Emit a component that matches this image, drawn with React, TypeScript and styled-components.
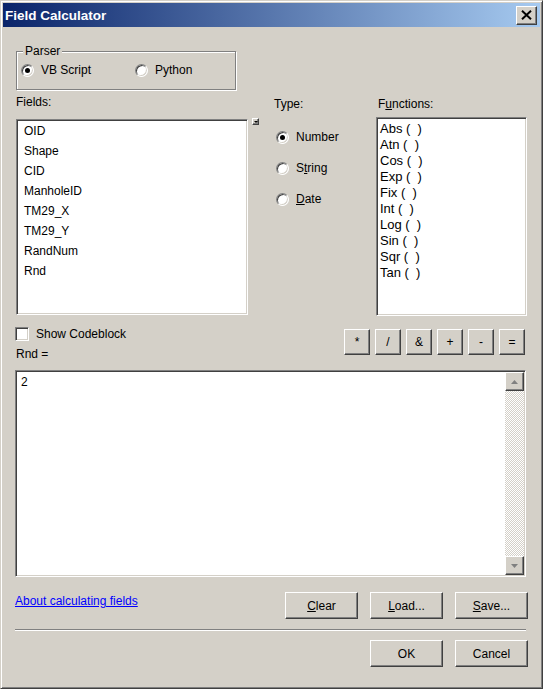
import styled, { createGlobalStyle } from "styled-components";

const GlobalStyle = createGlobalStyle`
  html, body {
    margin: 0;
    padding: 0;
    background: #d4d0c8;
  }
  body {
    font-family: "Liberation Sans", Arial, sans-serif;
    font-size: 12px;
    color: #000;
  }
`;

// classic 3D edges
const raised = `
  background: #d4d0c8;
  border: 1px solid;
  border-color: #fff #404040 #404040 #fff;
  box-shadow: inset -1px -1px 0 #808080, inset 1px 1px 0 #d4d0c8;
`;

const sunken = `
  background: #fff;
  border: 1px solid;
  border-color: #808080 #fff #fff #808080;
  box-shadow: inset 1px 1px 0 #404040, inset -1px -1px 0 #d4d0c8;
`;

const Window = styled.div`
  box-sizing: border-box;
  width: 543px;
  height: 689px;
  display: flex;
  flex-direction: column;
  padding: 2px;
  background: #d4d0c8;
  border: 1px solid;
  border-color: #d4d0c8 #404040 #404040 #d4d0c8;
  box-shadow: inset 1px 1px 0 #fff, inset -1px -1px 0 #808080;
`;

const TitleBar = styled.div`
  height: 24px;
  display: flex;
  align-items: center;
  justify-content: space-between;
  padding-left: 2px;
  background: linear-gradient(to right, #0a246a, #a6caf0);
`;

const Title = styled.span`
  color: #fff;
  font-weight: bold;
  font-size: 13.5px;
`;

const CloseButton = styled.div`
  ${raised}
  box-sizing: border-box;
  width: 21px;
  height: 19px;
  margin-right: 3px;
  display: flex;
  align-items: center;
  justify-content: center;
`;

const Content = styled.div`
  flex: 1;
  display: flex;
  flex-direction: column;
  padding: 0 12px;
`;

const Group = styled.fieldset`
  box-sizing: border-box;
  width: 220px;
  margin: 17px 0 0 1px;
  padding: 5px 0 12px 4px;
  border: 1px solid #808080;
  box-shadow: inset 1px 1px 0 #fff, 1px 1px 0 #fff;
`;

const Legend = styled.legend`
  margin-left: 2px;
  padding: 0 2px;
  line-height: 14px;
  background: #d4d0c8;
`;

const ParserRow = styled.div`
  display: grid;
  grid-template-columns: 114px auto;
`;

const Option = styled.label`
  display: flex;
  align-items: center;
  gap: 7px;
  height: 14px;
  line-height: 14px;
  white-space: nowrap;
`;

const RadioDot = styled.span<{ $checked?: boolean }>`
  ${sunken}
  box-sizing: border-box;
  position: relative;
  flex: none;
  width: 13px;
  height: 13px;
  border-radius: 50%;

  &::after {
    content: "";
    display: ${(p) => (p.$checked ? "block" : "none")};
    position: absolute;
    left: 3px;
    top: 3px;
    width: 5px;
    height: 5px;
    border-radius: 50%;
    background: #000;
  }
`;

const Columns = styled.div`
  display: grid;
  grid-template-columns: 243px 117px 151px;
  margin-top: 5px;
  padding-left: 1px;
`;

const Column = styled.div<{ $indent?: number }>`
  display: flex;
  flex-direction: column;
  padding-left: ${(p) => p.$indent ?? 0}px;
`;

const Label = styled.div<{ $top?: number; $indent?: number }>`
  line-height: 14px;
  margin-top: ${(p) => p.$top ?? 0}px;
  padding-left: ${(p) => p.$indent ?? 0}px;
  white-space: nowrap;
`;

const ListRow = styled.div`
  display: flex;
  align-items: flex-start;
  margin-top: 10px;
`;

const ListBox = styled.div<{ $w: number; $h: number }>`
  ${sunken}
  box-sizing: border-box;
  width: ${(p) => p.$w}px;
  height: ${(p) => p.$h}px;
  padding: 1px 2px 0;
  overflow: hidden;
`;

const FieldItem = styled.div`
  line-height: 20px;
  padding-left: 5px;
`;

const FuncList = styled(ListBox)`
  margin-top: 6px;
  padding: 3px 2px;
`;

const FuncItem = styled.div`
  font-size: 13px;
  line-height: 16px;
  padding-left: 1px;
  white-space: pre;
`;

const Grip = styled.div`
  ${raised}
  box-sizing: border-box;
  width: 7px;
  height: 7px;
  margin: -1px 0 0 4px;
  position: relative;

  &::after {
    content: "";
    position: absolute;
    left: 1px;
    top: 2px;
    border-left: 2px solid transparent;
    border-right: 2px solid transparent;
    border-top: 2px solid #000;
  }
`;

const TypeStack = styled.div`
  display: flex;
  flex-direction: column;
  gap: 17px;
  margin-top: 19px;
  padding-left: 2px;
`;

const CodeRow = styled.div`
  display: flex;
  justify-content: space-between;
  align-items: flex-start;
  margin-top: 11px;
`;

const CheckBox = styled.span`
  ${sunken}
  box-sizing: border-box;
  flex: none;
  width: 14px;
  height: 14px;
`;

const Operators = styled.div`
  display: flex;
  gap: 5px;
  margin: 2px 3px 0 0;
`;

const OpButton = styled.button`
  ${raised}
  box-sizing: border-box;
  width: 26px;
  height: 26px;
  padding: 0;
  font: inherit;
  color: #000;
`;

const Expression = styled.div`
  ${sunken}
  box-sizing: border-box;
  height: 207px;
  margin: 9px 2px 0 0;
  padding: 1px;
  display: flex;
`;

const ExpressionText = styled.div`
  flex: 1;
  padding: 3px 4px;
  line-height: 14px;
`;

const ScrollBar = styled.div`
  width: 19px;
  display: flex;
  flex-direction: column;
  background: repeating-conic-gradient(#fff 0 25%, #d4d0c8 0 50%) 0 0 / 2px 2px;
`;

const Track = styled.div`
  flex: 1;
`;

const ArrowButton = styled.div`
  ${raised}
  box-sizing: border-box;
  height: 19px;
  display: flex;
  align-items: center;
  justify-content: center;
`;

const ActionRow = styled.div`
  display: flex;
  justify-content: space-between;
  align-items: flex-start;
  margin-top: 15px;
`;

const HelpLink = styled.a`
  margin-top: 2px;
  color: #0000ff;
  text-decoration: underline;
  line-height: 14px;
  cursor: pointer;
`;

const ButtonGroup = styled.div`
  display: flex;
  gap: 12px;
`;

const Button = styled.button`
  ${raised}
  box-sizing: border-box;
  width: 73px;
  height: 27px;
  padding: 0;
  font: inherit;
  color: #000;
`;

const Separator = styled.div`
  margin: 10px 2px 0 0;
  border-top: 1px solid #808080;
  border-bottom: 1px solid #fff;
`;

const Footer = styled.div`
  display: flex;
  justify-content: flex-end;
  gap: 12px;
  margin-top: 9px;
`;

const fields = ["OID", "Shape", "CID", "ManholeID", "TM29_X", "TM29_Y", "RandNum", "Rnd"];
const functions = ["Abs", "Atn", "Cos", "Exp", "Fix", "Int", "Log", "Sin", "Sqr", "Tan"];
const operators = ["*", "/", "&", "+", "-", "="];

const Arrow = ({ up }: { up?: boolean }) => (
  <svg width="7" height="4" viewBox="0 0 7 4">
    <path d={up ? "M3.5 0 L7 4 L0 4 Z" : "M0 0 L7 0 L3.5 4 Z"} fill="#808080" />
  </svg>
);

const App = () => {
  return (
    <>
      <GlobalStyle />
      <Window>
        <TitleBar>
          <Title>Field Calculator</Title>
          <CloseButton>
            <svg width="11" height="10" viewBox="0 0 11 10">
              <path d="M1 0.8 L10 9.2 M10 0.8 L1 9.2" stroke="#000" strokeWidth="2" />
            </svg>
          </CloseButton>
        </TitleBar>

        <Content>
          <Group>
            <Legend>Parser</Legend>
            <ParserRow>
              <Option>
                <RadioDot $checked />
                VB Script
              </Option>
              <Option>
                <RadioDot />
                Python
              </Option>
            </ParserRow>
          </Group>

          <Columns>
            <Column>
              <Label>Fields:</Label>
              <ListRow>
                <ListBox $w={232} $h={196}>
                  {fields.map((f) => (
                    <FieldItem key={f}>{f}</FieldItem>
                  ))}
                </ListBox>
                <Grip />
              </ListRow>
            </Column>

            <Column $indent={15}>
              <Label $top={2}>Type:</Label>
              <TypeStack>
                <Option>
                  <RadioDot $checked />
                  Number
                </Option>
                <Option>
                  <RadioDot />
                  <span>
                    S<u>t</u>ring
                  </span>
                </Option>
                <Option>
                  <RadioDot />
                  <span>
                    <u>D</u>ate
                  </span>
                </Option>
              </TypeStack>
            </Column>

            <Column>
              <Label $top={2} $indent={2}>
                F<u>u</u>nctions:
              </Label>
              <FuncList $w={151} $h={199}>
                {functions.map((fn) => (
                  <FuncItem key={fn}>{`${fn} (  )`}</FuncItem>
                ))}
              </FuncList>
            </Column>
          </Columns>

          <CodeRow>
            <div>
              <Option>
                <CheckBox />
                Show Codeblock
              </Option>
              <Label $top={6} $indent={1}>
                Rnd =
              </Label>
            </div>
            <Operators>
              {operators.map((op) => (
                <OpButton key={op}>{op}</OpButton>
              ))}
            </Operators>
          </CodeRow>

          <Expression>
            <ExpressionText>2</ExpressionText>
            <ScrollBar>
              <ArrowButton>
                <Arrow up />
              </ArrowButton>
              <Track />
              <ArrowButton>
                <Arrow />
              </ArrowButton>
            </ScrollBar>
          </Expression>

          <ActionRow>
            <HelpLink>About calculating fields</HelpLink>
            <ButtonGroup>
              <Button>
                <u>C</u>lear
              </Button>
              <Button>
                <u>L</u>oad...
              </Button>
              <Button>
                <u>S</u>ave...
              </Button>
            </ButtonGroup>
          </ActionRow>

          <Separator />

          <Footer>
            <Button>OK</Button>
            <Button>Cancel</Button>
          </Footer>
        </Content>
      </Window>
    </>
  );
};

export default App;
